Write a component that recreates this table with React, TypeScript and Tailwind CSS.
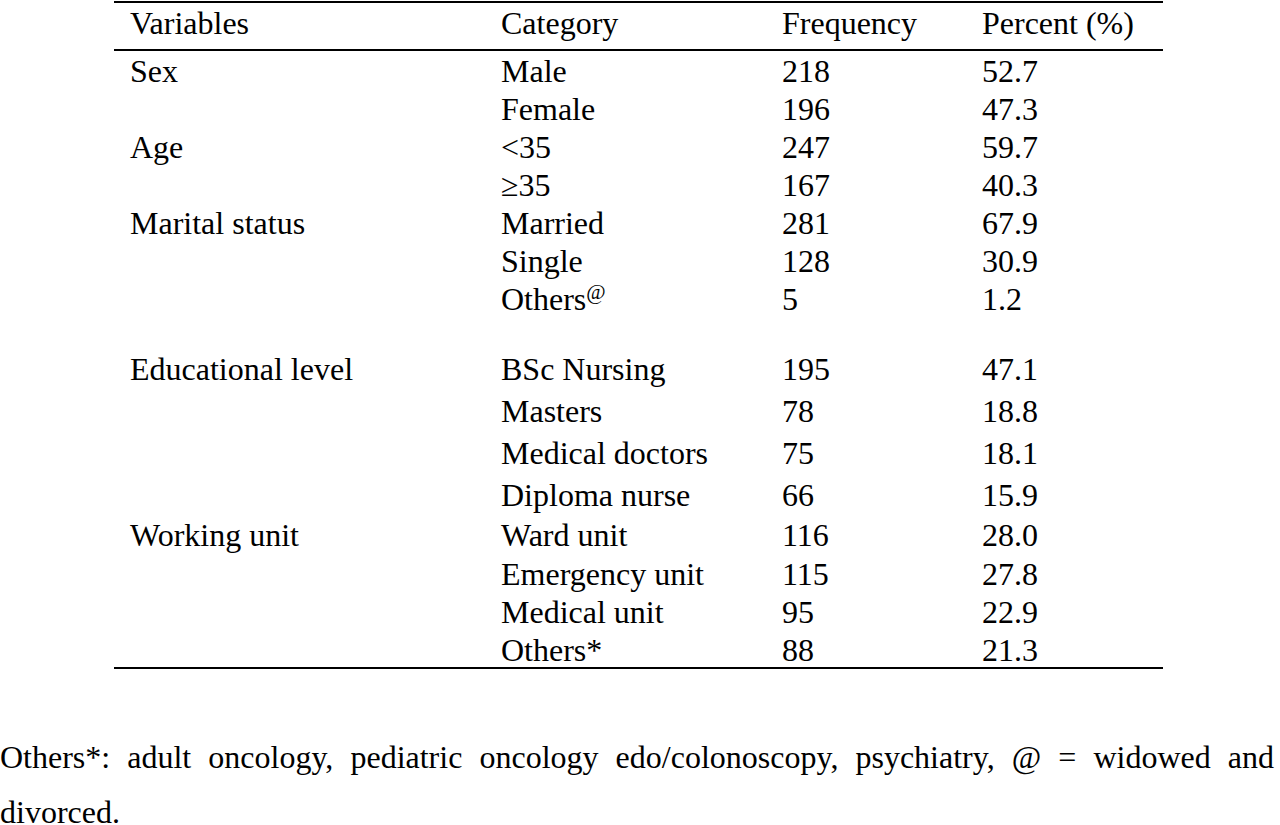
import React from 'react';

type Row = { variable?: string; category: React.ReactNode; freq: string; pct: string; h?: string };

const groups: { rows: Row[]; h: string; gap: string }[] = [
  {
    h: 'h-[38px] leading-[38px]',
    gap: 'mt-[1px]',
    rows: [
      { variable: 'Sex', category: 'Male', freq: '218', pct: '52.7' },
      { category: 'Female', freq: '196', pct: '47.3' },
      { variable: 'Age', category: '<35', freq: '247', pct: '59.7' },
      { category: '≥35', freq: '167', pct: '40.3' },
      { variable: 'Marital status', category: 'Married', freq: '281', pct: '67.9' },
      { category: 'Single', freq: '128', pct: '30.9' },
      {
        category: (
          <>
            Others<span className="text-[21px] leading-none align-[11px]">@</span>
          </>
        ),
        freq: '5',
        pct: '1.2',
      },
    ],
  },
  {
    h: 'h-[42px] leading-[42px]',
    gap: 'mt-[30px]',
    rows: [
      { variable: 'Educational level', category: 'BSc Nursing', freq: '195', pct: '47.1' },
      { category: 'Masters', freq: '78', pct: '18.8' },
      { category: 'Medical doctors', freq: '75', pct: '18.1' },
      { category: 'Diploma nurse', freq: '66', pct: '15.9' },
    ],
  },
  {
    h: 'h-[38.5px] leading-[38.5px]',
    gap: '',
    rows: [
      { variable: 'Working unit', category: 'Ward unit', freq: '116', pct: '28.0' },
      { category: 'Emergency unit', freq: '115', pct: '27.8' },
      { category: 'Medical unit', freq: '95', pct: '22.9' },
      { category: 'Others*', freq: '88', pct: '21.3', h: 'h-[35.5px] leading-[36px]' },
    ],
  },
];

const cols = 'grid grid-cols-[371px_281px_200px_197px]';

export default function App() {
  return (
    <div className="w-[1280px] h-[825px] bg-white text-black overflow-hidden pt-[1px] font-['Liberation_Serif']">
      {/* Table */}
      <div className="ml-[114px] w-[1049px] text-[32px] border-t-2 border-b-2 border-black">
        <div className={`${cols} h-[48px] leading-[36px] pt-[2px] border-b-2 border-black`}>
          <div className="pl-[16px]">Variables</div>
          <div className="pl-[16px]">Category</div>
          <div className="pl-[16px]">Frequency</div>
          <div className="pl-[16px]">Percent (%)</div>
        </div>

        {groups.map((g, gi) => (
          <div key={gi} className={g.gap}>
            {g.rows.map((r, ri) => (
              <div key={ri} className={`${cols} ${r.h ?? g.h} whitespace-nowrap`}>
                <div className="pl-[16px]">{r.variable}</div>
                <div className="pl-[16px]">{r.category}</div>
                <div className="pl-[16px]">{r.freq}</div>
                <div className="pl-[16px]">{r.pct}</div>
              </div>
            ))}
          </div>
        ))}
      </div>

      {/* Footnote */}
      <p className="mt-[61px] w-[1274px] text-[32px] leading-[55px] text-justify">
        Others*: adult oncology, pediatric oncology edo/colonoscopy, psychiatry, @ = widowed and
        divorced.
      </p>
    </div>
  );
}
